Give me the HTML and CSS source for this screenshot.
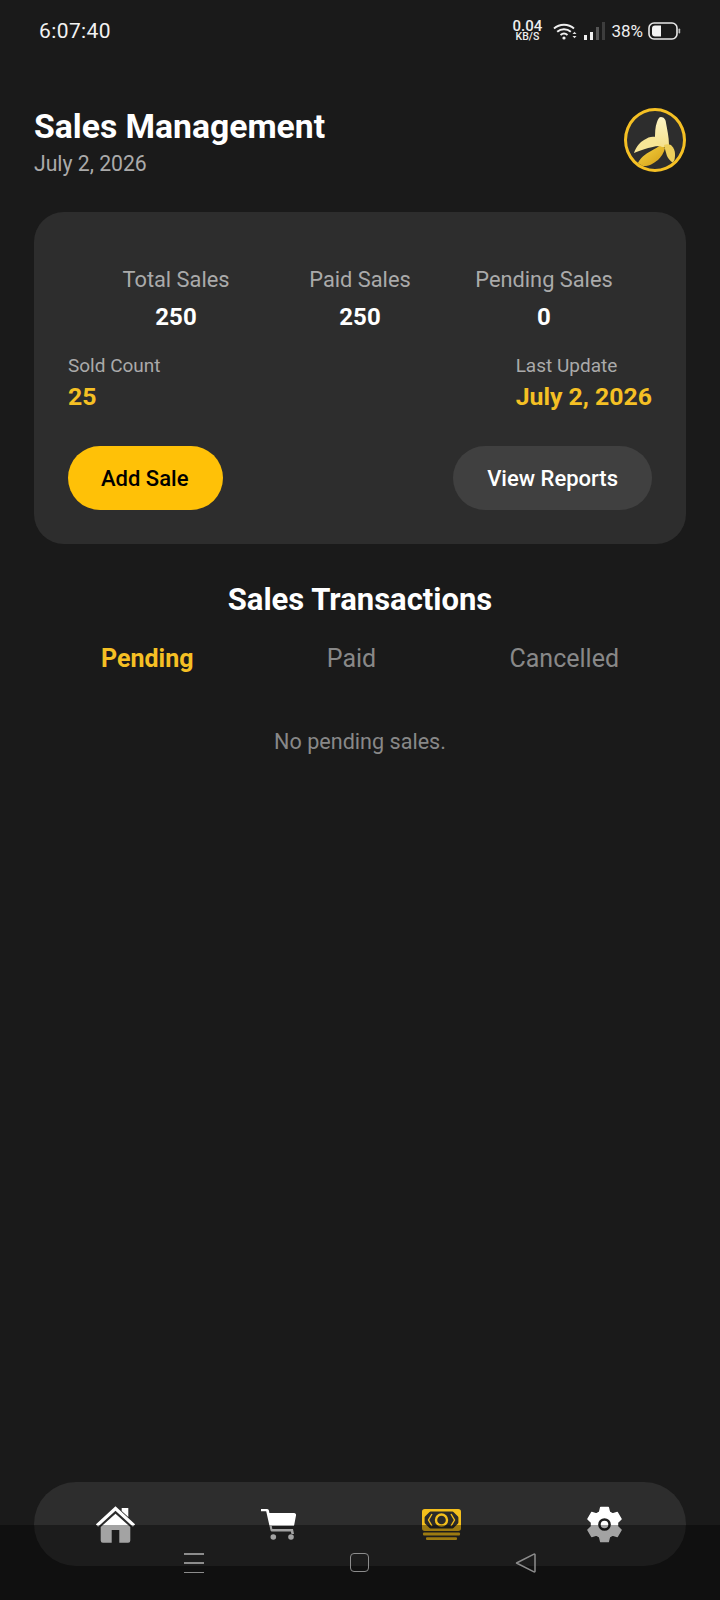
FILE: index.html
```html
<!DOCTYPE html>
<html lang="en">
<head>
<meta charset="utf-8">
<title>Sales Management</title>
<link rel="stylesheet" href="styles.css">
</head>
<body>
<div class="screen">
  <div class="statusbar">
    <span class="clock">6:07:40</span>
    <div class="status-right">
      <div class="netspeed"><span class="net-num">0.04</span><span class="net-unit">KB/S</span></div>
      <svg class="ic-wifi" viewBox="0 0 24 17" width="24" height="17"><path d="M1 5.500C6.500 .5 15.500 .5 21 5.500M4.200 8.800C8 5.400 14 5.400 17.800 8.800M7.500 12C9.600 10.200 12.400 10.200 14.500 12" fill="none" stroke="#f0f0f0" stroke-width="1.900"/><circle cx="11" cy="15" r="1.600" fill="#f0f0f0"/><path d="M19.500 11l2-2.200 2 2.200zM19.500 13l2 2.200 2-2.200z" fill="#e0e0e0"/></svg>
      <svg class="ic-signal" viewBox="0 0 22 18" width="22" height="18"><rect x="0" y="13" width="3" height="5" fill="#eee"/><rect x="6" y="10" width="3" height="8" fill="#eee"/><rect x="12" y="5" width="3" height="13" fill="#555"/><rect x="18" y="0" width="3" height="18" fill="#3d3d3d"/></svg>
      <span class="pct">38%</span>
      <svg class="ic-batt" viewBox="0 0 33 18" width="33" height="18"><rect x="1" y="1" width="28" height="16" rx="5" fill="none" stroke="#e8e8e8" stroke-width="1.600"/><path d="M7 3.500h6v11H7a3 3 0 0 1-3-3v-5a3 3 0 0 1 3-3z" fill="#f4f4f4"/><rect x="30.500" y="6.500" width="1.700" height="5" rx=".8" fill="#bbb"/></svg>
    </div>
  </div>

  <header class="head">
    <div class="head-text">
      <h1 class="title">Sales Management</h1>
      <p class="date">July 2, 2026</p>
    </div>
    <div class="avatar">
      <svg viewBox="0 0 56 58" width="56" height="58">
        <defs>
          <linearGradient id="bPeel" x1="0" y1="0" x2="0" y2="1"><stop offset="0" stop-color="#fdf4c4"/><stop offset="1" stop-color="#f4e08c"/></linearGradient>
          <linearGradient id="bBody" x1="0" y1="0" x2="1" y2="1"><stop offset="0" stop-color="#f6d544"/><stop offset="1" stop-color="#d39c14"/></linearGradient>
        </defs>
        <path d="M10 54C13 47 18 43 24 40C28 38 32 35 34 34L38 37C37 42 34 46 31 49C27 52 22 55 19 55C16 55 12 55 10 54z" fill="url(#bBody)"/>
        <path d="M7 42C9 36 13 31 17 29C21 26 25 25 29 26C31 28 33 32 33 35C27 35 22 37 18 38C14 39 10 41 7 42z" fill="#f7e596"/>
        <path d="M28 29C28 22 28 16 30 11C31 8 32 6 34 6C37 6 39 9 39 12C40 18 42 26 42 34C40 36 37 36 35 36C32 35 29 32 28 29z" fill="url(#bPeel)"/>
        <path d="M37 34C39 33 42 33 44 34C47 37 48 40 48 43C48 46 48 49 46 52C43 50 41 47 40 45C39 42 38 38 37 34z" fill="#edcf5c"/>
      </svg>
    </div>
  </header>

  <section class="card">
    <div class="stats">
      <div class="stat"><span class="stat-label">Total Sales</span><span class="stat-value">250</span></div>
      <div class="stat"><span class="stat-label">Paid Sales</span><span class="stat-value">250</span></div>
      <div class="stat"><span class="stat-label">Pending Sales</span><span class="stat-value">0</span></div>
    </div>
    <div class="meta">
      <div class="meta-item"><span class="meta-label">Sold Count</span><span class="meta-value">25</span></div>
      <div class="meta-item"><span class="meta-label">Last Update</span><span class="meta-value">July 2, 2026</span></div>
    </div>
    <div class="actions">
      <button class="btn btn-primary">Add Sale</button>
      <button class="btn btn-secondary">View Reports</button>
    </div>
  </section>

  <h2 class="section-title">Sales Transactions</h2>
  <div class="tabs">
    <span class="tab tab-active">Pending</span>
    <span class="tab">Paid</span>
    <span class="tab">Cancelled</span>
  </div>
  <p class="empty">No pending sales.</p>

  <nav class="bottomnav">
    <svg viewBox="0 0 39 37" width="39" height="37"><path d="M25.700 2h6.600v9l-6.600-6z" fill="#fff"/><path d="M1 19.500L19.500 2.500L38 19.500" fill="none" stroke="#fff" stroke-width="3.200"/><path d="M19.500 7.800L4.700 21V34.500a2.200 2.200 0 0 0 2.200 2.200h8.800V24h7.600v12.700h8.800a2.200 2.200 0 0 0 2.200-2.200V21z" fill="#fff"/></svg>
    <svg viewBox="0 0 35 31" width="35" height="31"><path d="M0 0h6a2 2 0 0 1 2 1.700l.4 2.300H33a2 2 0 0 1 2 2.500l-2 10.500H10.800l.5 3H32l1 5H30.500l-.7-2.500H11a1.500 1.500 0 0 1-1.500-1.200L5.200 2.300H0z" fill="#fff"/><circle cx="12.300" cy="28" r="2.800" fill="#fff"/><circle cx="30" cy="28" r="2.800" fill="#fff"/></svg>
    <svg viewBox="0 0 39 31" width="39" height="31"><rect x="1.300" y="1.300" width="36.400" height="19.400" rx="1.500" fill="#2a2a2a" stroke="#f4bf1c" stroke-width="2.600"/><circle cx="19.500" cy="11" r="5.500" fill="none" stroke="#f4bf1c" stroke-width="2.400"/><path d="M2 2h6.500L2 8.500zM37 2h-6.500L37 8.500zM2 20h6.500L2 13.500zM37 20h-6.500L37 13.500z" fill="#f4bf1c"/><path d="M10 5L6.500 11L10 17M29 5L32.500 11L29 17" fill="none" stroke="#f4bf1c" stroke-width="1.400"/><rect x="1" y="23.500" width="37" height="3" rx="1" fill="#f4bf1c"/><rect x="4" y="28.200" width="31" height="2.800" rx="1" fill="#f4bf1c"/></svg>
    <svg viewBox="-1 -1 39 39" width="37" height="37"><path fill-rule="evenodd" d="M14.500 .5h8l1.200 5 3.300 1.900 5-1.500 4 6.900-3.800 3.500v4.400l3.800 3.500-4 6.900-5-1.500-3.300 1.900-1.200 5h-8l-1.200-5-3.300-1.900-5 1.500-4-6.900 3.800-3.500v-4.400L1 12.800l4-6.900 5 1.500 3.300-1.900z" fill="#fff" stroke="#fff" stroke-width="1.500" stroke-linejoin="round"/><circle cx="18.500" cy="18.500" r="6.700" fill="#1e1e1e"/><circle cx="18.500" cy="18.500" r="4" fill="#fff"/></svg>
  </nav>

  <div class="sysnav">
    <div class="ic-menu"><i></i><i></i><i></i></div>
    <div class="ic-square"></div>
    <svg viewBox="0 0 21 20" width="21" height="20"><path d="M1.500 10L19 1.200a.6.6 0 0 1 1 .5V18.300a.6.6 0 0 1-1 .5z" fill="none" stroke="#8c8c8c" stroke-width="1.500" stroke-linejoin="round"/></svg>
  </div>
</div>
</body>
</html>
```

FILE: styles.css
```css
* { box-sizing: border-box; }
html, body { margin: 0; padding: 0; }
body { font-family: Roboto, "Liberation Sans", sans-serif; background: #1a1a1a; color: #fff; }
.screen { position: relative; width: 720px; height: 1600px; overflow: hidden; background: #1a1a1a; display: flex; flex-direction: column; }

.statusbar { height: 62px; padding: 0 39px; display: flex; align-items: center; justify-content: space-between; }
.clock { font-size: 21px; color: #f2f2f2; letter-spacing: .4px; }
.status-right { display: flex; align-items: center; }
.netspeed { display: flex; flex-direction: column; align-items: center; width: 30px; font-weight: 500; color: #eee; margin-right: 11px; }
.net-num { font-size: 15px; line-height: 12px; }
.net-unit { font-size: 10.500px; line-height: 10px; }
.ic-wifi { margin-right: 7px; }
.ic-signal { margin-right: 5px; }
.pct { font-size: 17px; color: #eee; margin-right: 5px; }

.head { display: flex; justify-content: space-between; align-items: flex-start; padding: 0 34px; margin-top: 46px; }
.title { margin: 0; font-size: 33.700px; line-height: 38px; font-weight: 700; color: #fff; }
.date { margin: 5px 0 0; font-size: 21.200px; line-height: 26px; color: #aaa; }
.avatar { width: 62px; height: 64px; border: 3px solid #f5c024; border-radius: 50%; background: #2d2d2d; display: flex; align-items: center; justify-content: center; overflow: hidden; }

.card { margin: 35px 34px 0; height: 332px; padding: 56px 34px 0; background: #2d2d2d; border-radius: 30px; display: flex; flex-direction: column; }
.stats { display: grid; grid-template-columns: repeat(3, 1fr); padding: 0 16px; }
.stat { display: flex; flex-direction: column; align-items: center; }
.stat-label { font-size: 21.800px; line-height: 24px; color: #aaa; white-space: nowrap; }
.stat-value { font-size: 24px; line-height: 28px; font-weight: 700; color: #fff; margin-top: 11px; }
.meta { display: flex; justify-content: space-between; margin-top: 24px; }
.meta-item { display: flex; flex-direction: column; }
.meta-label { font-size: 19px; line-height: 22px; color: #aaa; }
.meta-value { font-size: 24.800px; line-height: 28px; font-weight: 700; color: #f5c024; margin-top: 6px; }
.actions { display: flex; justify-content: space-between; margin-top: 35px; }
.btn { height: 64px; border: 0; border-radius: 32px; font-family: inherit; font-size: 22px; font-weight: 500; }
.btn-primary { background: #ffc107; color: #000; padding: 0 35px 0 33px; }
.btn-secondary { background: #404040; color: #fff; padding: 0 34px; }

.section-title { margin: 38px 0 0; text-align: center; font-size: 31px; line-height: 36px; font-weight: 700; color: #fff; }
.tabs { display: flex; margin: 25px 0 0; height: 32px; justify-content: space-between; padding: 0 101px; }
.tab { font-size: 25px; line-height: 32px; color: #888; }
.tab-active { color: #f5c024; font-weight: 700; }
.empty { margin: 53px 0 0; text-align: center; font-size: 21.600px; line-height: 28px; color: #888; }

.bottomnav { position: absolute; left: 34px; top: 1482px; width: 652px; height: 84px; border-radius: 42px; background: #2d2d2d; display: grid; grid-template-columns: repeat(4, 1fr); justify-items: center; align-items: center; }
.sysnav { position: absolute; left: 0; right: 0; top: 1525px; bottom: 0; background: rgba(0,0,0,.36); display: flex; align-items: flex-start; justify-content: center; padding-top: 28px; gap: 146px; }
.ic-menu { width: 20px; height: 20px; display: flex; flex-direction: column; justify-content: space-between; }
.ic-menu i { display: block; height: 1.500px; background: #8c8c8c; }
.ic-square { width: 19px; height: 19px; border: 1.500px solid #8c8c8c; border-radius: 4px; }
```
